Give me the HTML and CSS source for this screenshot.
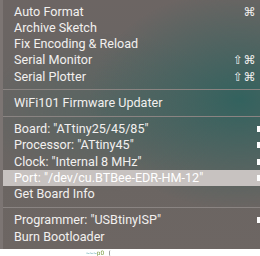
FILE: index.html
```html
<!DOCTYPE html>
<html>
<head>
<meta charset="utf-8">
<link rel="stylesheet" href="styles.css">
</head>
<body>
<div class="menu">
  <div class="item"><span class="label">Auto Format</span><span class="key">⌘</span></div>
  <div class="item"><span class="label">Archive Sketch</span></div>
  <div class="item"><span class="label">Fix Encoding &amp; Reload</span></div>
  <div class="item"><span class="label">Serial Monitor</span><span class="key">⇧⌘</span></div>
  <div class="item"><span class="label">Serial Plotter</span><span class="key">⇧⌘</span></div>
  <div class="sep"></div>
  <div class="item"><span class="label">WiFi101 Firmware Updater</span></div>
  <div class="sep"></div>
  <div class="item sub"><span class="label">Board: "ATtiny25/45/85"</span></div>
  <div class="item sub"><span class="label">Processor: "ATtiny45"</span></div>
  <div class="item sub"><span class="label">Clock: "Internal 8 MHz"</span></div>
  <div class="item sub active"><span class="label">Port: "/dev/cu.BTBee-EDR-HM-12"</span></div>
  <div class="item"><span class="label">Get Board Info</span></div>
  <div class="sep"></div>
  <div class="item sub"><span class="label">Programmer: "USBtinyISP"</span></div>
  <div class="item"><span class="label">Burn Bootloader</span></div>
</div>
<div class="code"><span class="c1">~~~</span><span class="c2">pO</span> <span class="c3">(</span></div>
</body>
</html>
```
FILE: styles.css
```css
html, body {
  margin: 0;
  padding: 0;
  background: #ffffff;
  width: 260px;
  height: 256px;
  overflow: hidden;
}
body {
  font-family: "Roboto", "Liberation Sans", sans-serif;
}
.menu {
  width: 260px;
  box-sizing: border-box;
  padding: 3.5px 0 4.5px 0;
  border-left: 3px solid #7c7573;
  color: #f2f0ef;
  font-size: 12.6px;
  background:
    radial-gradient(ellipse 150px 110px at 92% 40%, rgba(48, 98, 94, 0.95), rgba(48, 98, 94, 0) 100%),
    radial-gradient(ellipse 120px 80px at 40% 45%, rgba(70, 100, 96, 0.5), rgba(70, 100, 96, 0) 100%),
    linear-gradient(180deg, #6c6563 0%, #686563 45%, #6b6562 75%, #6d6663 100%);
}
.item {
  height: 16.25px;
  display: flex;
  align-items: center;
  justify-content: space-between;
  padding: 0 4px 0 11px;
  position: relative;
  line-height: 16px;
}
.item.active {
  background: #c7c2c0;
  color: #ffffff;
}
.key {
  font-family: "DejaVu Sans", sans-serif;
  font-size: 12px;
  letter-spacing: 0.5px;
}
.sub::after {
  content: "";
  position: absolute;
  right: 0;
  top: 5px;
  width: 3px;
  height: 6px;
  background: #ffffff;
}
.sep {
  height: 10px;
  display: flex;
  align-items: center;
}
.sep::before {
  content: "";
  display: block;
  width: 100%;
  height: 1px;
  background: #8a8482;
}
.code {
  font-family: "DejaVu Sans Mono", monospace;
  font-size: 6px;
  padding-left: 86px;
  line-height: 7px;
  height: 7px;
  filter: blur(0.3px);
}
.c1 { color: #5aa0a8; }
.c2 { color: #7a9a40; }
.c3 { color: #555555; }
```
